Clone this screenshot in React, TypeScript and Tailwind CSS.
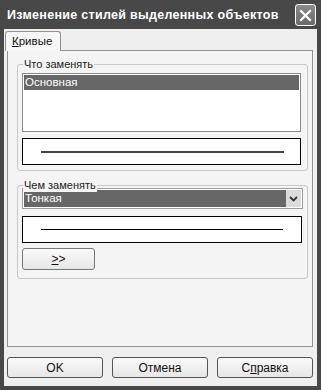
import React from 'react';

const font = { fontFamily: '"Liberation Sans", Arial, sans-serif' };

const GroupBox: React.FC<{ title: string; className: string; children: React.ReactNode }> = ({ title, className, children }) => (
  <div className={`relative border border-[#c8c8c8] rounded-[3px] ${className}`}>
    <span className="absolute -top-[8px] left-[5px] bg-[#f4f4f4] px-[1px] text-[11px] leading-[14px] text-[#222]">{title}</span>
    {children}
  </div>
);

const Button: React.FC<{ className?: string; children: React.ReactNode }> = ({ className = '', children }) => (
  <button className={`h-[21px] rounded-[3px] border border-[#555] bg-gradient-to-b from-[#fafafa] to-[#e6e6e6] text-[12px] leading-none text-[#111] flex items-center justify-center ${className}`}>
    {children}
  </button>
);

export default function App() {
  return (
    <div style={font} className="w-[321px] h-[390px] bg-[#484848] flex flex-col pl-[4px] pr-[4px] pb-[4px] overflow-hidden">
      {/* Title bar */}
      <div className="h-[29px] flex items-center justify-between shrink-0">
        <span className="pl-[3px] pt-[2px] whitespace-nowrap text-white font-bold text-[12.5px] tracking-[0.3px]">Изменение стилей выделенных объектов</span>
        <div className="w-[21px] h-[22px] mr-[1px] mt-[1px] shrink-0 rounded-[3px] border border-white bg-gradient-to-b from-[#8a8a8a] to-[#6a6a6a] flex items-center justify-center">
          <svg width="13" height="13" viewBox="0 0 13 13">
            <path d="M2 2 L11 11 M11 2 L2 11" stroke="white" strokeWidth="2.2" strokeLinecap="square" />
          </svg>
        </div>
      </div>

      {/* Body */}
      <div className="flex-1 bg-[#efefef] flex flex-col pt-[2px]">
        <div className="flex pl-[1px]">
          <div className="h-[20px] w-[56px] bg-[#f7f7f7] border border-b-0 border-[#919191] rounded-t-[3px] flex items-center pl-[6px] text-[11.5px] text-[#111] -mb-[1px] relative z-10">
            <span><span className="underline">К</span>ривые</span>
          </div>
        </div>
        <div className="ml-[3px] mr-[4px] h-[297px] bg-[#f4f4f4] border border-[#919191] flex flex-col pl-[9px] pt-[13px]">
          <GroupBox title="Что заменять" className="w-[291px] h-[107px] pl-[4px] pt-[8px]">
            <div className="w-[279px] h-[59px] bg-white border border-[#8a8a8a] p-[1px]">
              <div className="h-[15px] bg-[#676767] text-white text-[11.5px] leading-[15px] pl-[1px]">Основная</div>
            </div>
            <div className="mt-[6px] w-[279px] h-[27px] bg-white border border-black flex items-center pl-[18px]">
              <div className="w-[243px] h-[2px] bg-[#444]" />
            </div>
          </GroupBox>
          <GroupBox title="Чем заменять" className="mt-[14px] w-[291px] h-[94px] pl-[4px] pt-[2px]">
            <div className="w-[281px] h-[21px] bg-white border border-[#9c9c9c] flex p-[1px]">
              <div className="flex-1 bg-[#676767] text-white text-[11.5px] leading-[17px] pl-[1px]">Тонкая</div>
              <div className="w-[15px] bg-[#dcdcdc] flex items-center justify-center">
                <svg width="9" height="6" viewBox="0 0 9 6">
                  <path d="M1 1 L4.5 4.5 L8 1" stroke="#333" strokeWidth="1.8" fill="none" />
                </svg>
              </div>
            </div>
            <div className="mt-[7px] w-[280px] h-[27px] bg-white border border-black flex items-center pl-[18px]">
              <div className="w-[242px] h-[1px] bg-black" />
            </div>
            <Button className="mt-[5px] w-[73px] !h-[22px] border-[#777]">
              <span><span className="underline">&gt;</span>&gt;</span>
            </Button>
          </GroupBox>
        </div>
        <div className="flex ml-[3px] mt-[10px] gap-[9px]">
          <Button className="w-[96px]">OK</Button>
          <Button className="w-[96px]">Отмена</Button>
          <Button className="w-[96px]">С<span className="underline">п</span>равка</Button>
        </div>
      </div>
    </div>
  );
}
